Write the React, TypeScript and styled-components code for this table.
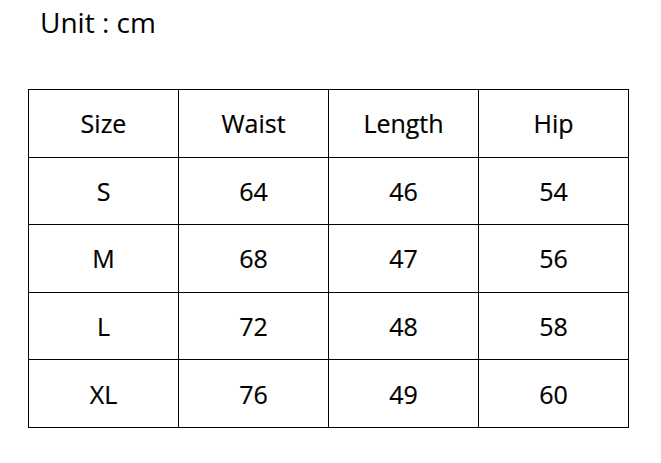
import React from "react";
import styled, { createGlobalStyle } from "styled-components";

const GlobalStyle = createGlobalStyle`
    body {
        margin: 0;
        background: #ffffff;
        font-family: "Open Sans", "Liberation Sans", sans-serif;
        color: #000000;
    }
`;

const headers = ["Size", "Waist", "Length", "Hip"];

const rows = [
    ["S", "64", "46", "54"],
    ["M", "68", "47", "56"],
    ["L", "72", "48", "58"],
    ["XL", "76", "49", "60"],
];

const App: React.FC = () => {
    return (
        <Page>
            <GlobalStyle />
            <Unit>Unit : cm</Unit>
            <SizeTable>
                <thead>
                    <tr>
                        {headers.map((h) => (
                            <Cell as="th" key={h}>
                                {h}
                            </Cell>
                        ))}
                    </tr>
                </thead>
                <tbody>
                    {rows.map((row) => (
                        <tr key={row[0]}>
                            {row.map((v, i) => (
                                <Cell key={i}>{v}</Cell>
                            ))}
                        </tr>
                    ))}
                </tbody>
            </SizeTable>
        </Page>
    );
};

const Page = styled.div`
    width: 661px;
    height: 463px;
    padding: 2px 0 0 28px;
    box-sizing: border-box;
`;

const Unit = styled.div`
    font-size: 28px;
    line-height: 40px;
    padding-left: 12px;
    height: 87px;
`;

const SizeTable = styled.table`
    border-collapse: collapse;
    table-layout: fixed;
    width: 601px;
`;

const Cell = styled.td`
    height: 66.6px;
    padding: 0;
    border: 1px solid #000000;
    text-align: center;
    vertical-align: middle;
    font-size: 25px;
    font-weight: normal;
    color: #000000;
    -webkit-text-stroke: 0.2px #000000;
`;

export default App;
